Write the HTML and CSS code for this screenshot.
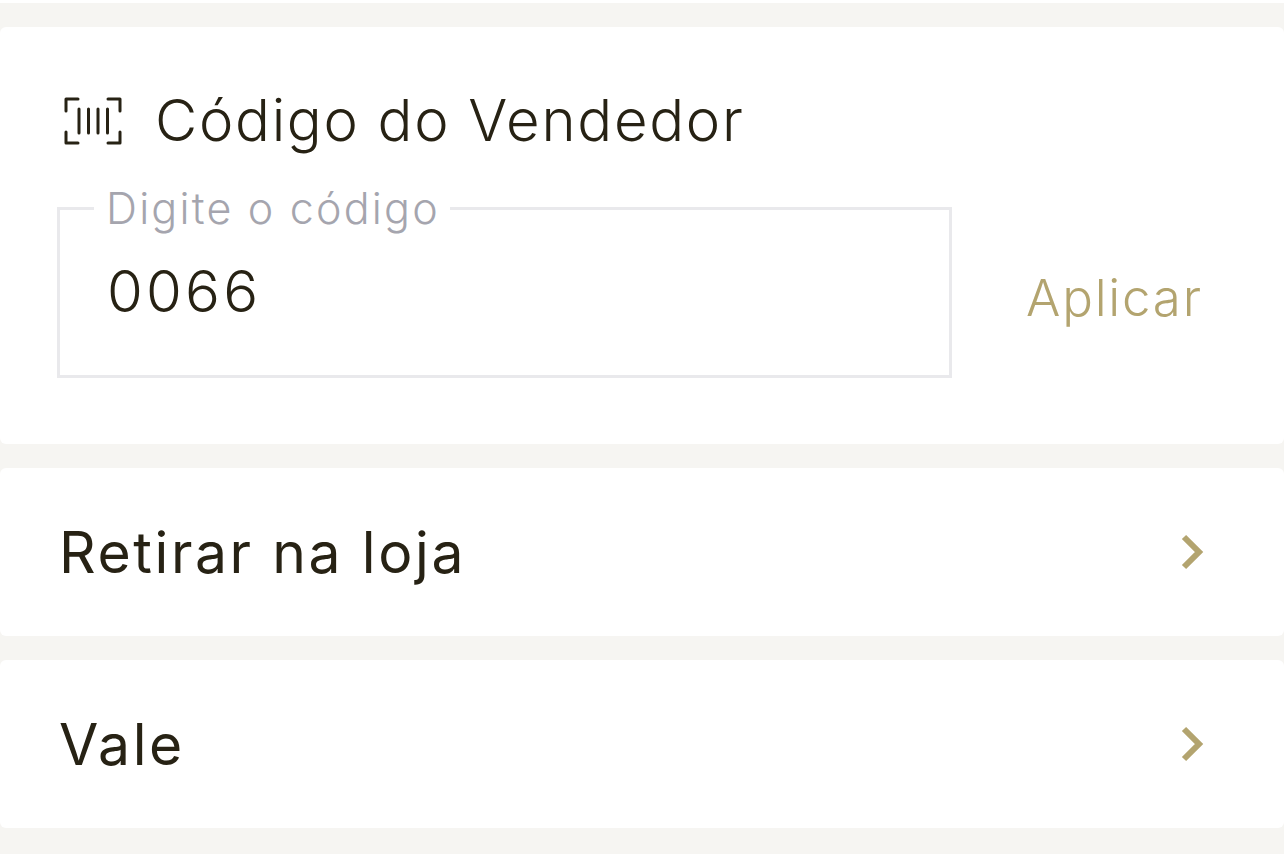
FILE: index.html
```html
<!DOCTYPE html>
<html lang="pt">
  <head>
    <meta charset="UTF-8" />
    <meta name="viewport" content="width=device-width, initial-scale=1.0" />
    <title>Código do Vendedor</title>
    <link rel="stylesheet" href="styles.css">
  </head>
  <body>
    <div class="top-strip"></div>
    <section class="card card-code">
      <div class="code-title">
        <svg class="scan-icon" width="60" height="50" viewBox="0 0 60 50" fill="none" stroke="#272214" stroke-width="3">
          <path d="M15 3H3V15M45 3H57V15M3 36V47H15M57 36V47H45" stroke-linecap="round" stroke-linejoin="round"/>
          <path d="M16 13V37M25.500 13V37M35 13V37M44.500 13V37" stroke-linecap="round"/>
        </svg>
        <span>Código do Vendedor</span>
      </div>
      <div class="code-row">
        <fieldset class="code-field">
          <legend class="code-legend">Digite o código</legend>
          <div class="code-value">0066</div>
        </fieldset>
        <a class="apply" href="#">Aplicar</a>
      </div>
    </section>
    <a class="card card-link" href="#">
      <span>Retirar na loja</span>
      <svg class="chevron" width="26" height="36" viewBox="0 0 26 36" fill="none" stroke="#b3a46f" stroke-width="6"><path d="M4 3L19 18L4 33"/></svg>
    </a>
    <a class="card card-link" href="#">
      <span>Vale</span>
      <svg class="chevron" width="26" height="36" viewBox="0 0 26 36" fill="none" stroke="#b3a46f" stroke-width="6"><path d="M4 3L19 18L4 33"/></svg>
    </a>
  </body>
</html>
```

FILE: styles.css
```css
* {
  box-sizing: border-box;
}

body {
  margin: 0;
  height: 854px;
  overflow: hidden;
  background-color: #f6f5f2;
  color: #272214;
  font-family: "Inter", "Liberation Sans", sans-serif;
}

.top-strip {
  height: 3px;
  background-color: #fff;
}

.card {
  display: block;
  margin-top: 24px;
  background-color: #fff;
  border-radius: 6px;
  text-decoration: none;
  color: inherit;
}

.card-code {
  height: 417px;
  padding: 66px 0 0 57px;
}

.code-title {
  display: flex;
  align-items: center;
  gap: 32px;
  padding-left: 6px;
  height: 54px;
  font-size: 58px;
  font-weight: 350;
  letter-spacing: 1.7px;
}

.scan-icon {
  flex: none;
  margin-top: 2px;
}

.code-row {
  display: flex;
  align-items: center;
  margin-top: 40px;
}

.code-field {
  width: 895px;
  height: 191px;
  margin: 0;
  padding: 0 0 0 47px;
  border: 3px solid #e9e9ec;
}

.code-legend {
  margin-left: -13px;
  padding: 0 10px 0 12px;
  font-size: 43px;
  font-weight: 350;
  line-height: 42px;
  letter-spacing: 2.2px;
  color: #a5a5ae;
}

.code-value {
  margin-top: 30px;
  font-size: 58px;
  font-weight: 360;
  line-height: 64px;
  letter-spacing: 3.2px;
}

.apply {
  margin: 29px 0 0 74px;
  font-size: 51px;
  font-weight: 350;
  letter-spacing: 1.8px;
  color: #b3a46f;
  text-decoration: none;
}

.card-link {
  display: flex;
  align-items: center;
  justify-content: space-between;
  height: 168px;
  padding: 0 78px 0 59px;
  font-size: 57px;
  font-weight: 420;
  letter-spacing: 2.6px;
}

.chevron {
  flex: none;
}
```
